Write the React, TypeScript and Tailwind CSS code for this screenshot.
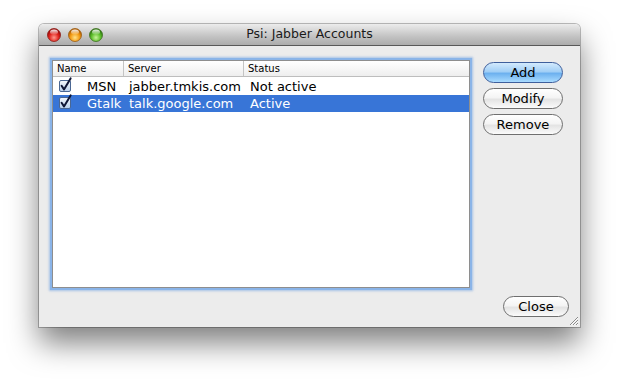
import React from "react";

const font = { fontFamily: '"DejaVu Sans", "Liberation Sans", sans-serif' };

function Light({ id, c1, c2, c3, stroke }: { id: string; c1: string; c2: string; c3: string; stroke: string }) {
  return (
    <svg width="14" height="14" viewBox="0 0 14 14" className="block">
      <defs>
        <radialGradient id={`g-${id}`} cx="50%" cy="70%" r="60%">
          <stop offset="0%" stopColor={c1} />
          <stop offset="60%" stopColor={c2} />
          <stop offset="100%" stopColor={c3} />
        </radialGradient>
        <linearGradient id={`h-${id}`} x1="0" y1="0" x2="0" y2="1">
          <stop offset="0%" stopColor="#ffffff" stopOpacity="0.95" />
          <stop offset="100%" stopColor="#ffffff" stopOpacity="0.1" />
        </linearGradient>
      </defs>
      <circle cx="7" cy="7" r="6.5" fill={`url(#g-${id})`} stroke={stroke} strokeWidth="0.8" />
      <ellipse cx="7" cy="4" rx="4" ry="2.6" fill={`url(#h-${id})`} />
    </svg>
  );
}

function Check() {
  return (
    <svg width="14" height="16" viewBox="0 0 14 16" className="block" style={{ overflow: "visible" }}>
      <defs>
        <linearGradient id="cb" x1="0" y1="0" x2="0" y2="1">
          <stop offset="0%" stopColor="#f4f8fd" />
          <stop offset="100%" stopColor="#b9d0ec" />
        </linearGradient>
      </defs>
      <rect x="1.5" y="3.5" width="11" height="11" rx="1.5" fill="url(#cb)" stroke="#4a6793" />
      <path d="M3.6 8.8 L6 12.4 L12.6 1.4" fill="none" stroke="#0e1636" strokeWidth="2" strokeLinecap="round" strokeLinejoin="round" />
    </svg>
  );
}

function Btn({ label, primary, w }: { label: string; primary?: boolean; w: string }) {
  return (
    <div
      className={`${w} h-[21px] rounded-full border flex items-center justify-center text-[13px] text-black leading-none ${
        primary
          ? "border-[#3f5f9c] bg-[linear-gradient(to_bottom,#d3eafd_0%,#a2cff6_45%,#6db1ef_55%,#a9dbff_100%)]"
          : "border-[#6f6f6f] bg-[linear-gradient(to_bottom,#ffffff_0%,#f4f4f4_45%,#e4e4e4_55%,#fbfbfb_100%)]"
      }`}
      style={font}
    >
      {label}
    </div>
  );
}

export default function App() {
  const rows = [
    { name: "MSN", server: "jabber.tmkis.com", status: "Not active", sel: false },
    { name: "Gtalk", server: "talk.google.com", status: "Active", sel: true },
  ];
  return (
    <div className="w-[620px] h-[382px] bg-white overflow-hidden pt-[24px] pl-[39px]" style={font}>
      <div className="w-[541px] h-[303px] rounded-t-[5px] flex flex-col shadow-[0_16px_30px_rgba(0,0,0,0.5),0_0_0_1px_rgba(0,0,0,0.25)] relative">
        {/* Title bar */}
        <div className="h-[22px] rounded-t-[5px] bg-[linear-gradient(to_bottom,#ececec,#c2c2c2_60%,#acacac)] border-b border-[#585858] flex items-center relative">
          <div className="flex items-center gap-[7px] pl-[8px]">
            <Light id="r" c1="#ff9a8f" c2="#e0231c" c3="#9c0b0b" stroke="#8a1a15" />
            <Light id="o" c1="#ffe38a" c2="#f39a12" c3="#b35e00" stroke="#9a5a10" />
            <Light id="g" c1="#c8f59a" c2="#5cbd2a" c3="#2f7a10" stroke="#3d7020" />
          </div>
          <div className="absolute inset-0 flex items-center justify-center text-[12.5px] text-[#1a1a1a] pointer-events-none">
            Psi: Jabber Accounts
          </div>
        </div>
        {/* Body */}
        <div className="flex-1 bg-[#ececec] flex flex-col">
          <div className="flex items-start pt-[14px] pl-[13px]">
            <div className="w-[418px] h-[228px] bg-white border border-[#8e8e8e] shadow-[0_0_0_2px_#8ab4e8,0_0_2px_3px_rgba(110,160,225,0.55)]">
              <div className="flex h-[16px] border-b border-[#bdbdbd] bg-[linear-gradient(to_bottom,#ffffff,#eeeeee)] text-[10px] text-black leading-none">
                <div className="w-[71px] pl-[4px] flex items-center border-r border-[#c4c4c4]">Name</div>
                <div className="w-[120px] pl-[4px] flex items-center border-r border-[#c4c4c4]">Server</div>
                <div className="flex-1 pl-[4px] flex items-center">Status</div>
              </div>
              <div className="mt-[1px]">
                {rows.map((r) => (
                  <div
                    key={r.name}
                    className={`flex h-[17px] items-center text-[13px] leading-none ${
                      r.sel ? "bg-[#3875d7] text-white" : "text-black"
                    }`}
                  >
                    <div className="w-[71px] flex items-center">
                      <div className="ml-[5px] w-[14px] -mt-[4px]">
                        <Check />
                      </div>
                      <span className="ml-[15px]">{r.name}</span>
                    </div>
                    <div className="w-[120px] pl-[5px]">{r.server}</div>
                    <div className="flex-1 pl-[6px]">{r.status}</div>
                  </div>
                ))}
              </div>
            </div>
            <div className="ml-[13px] mt-[2px] flex flex-col gap-[5px]">
              <Btn label="Add" primary w="w-[80px]" />
              <Btn label="Modify" w="w-[80px]" />
              <Btn label="Remove" w="w-[80px]" />
            </div>
          </div>
          <div className="flex justify-end pr-[11px] mt-[8px]">
            <Btn label="Close" w="w-[66px]" />
          </div>
        </div>
        <svg className="absolute right-[1px] bottom-[1px]" width="11" height="11" viewBox="0 0 11 11">
          <path d="M10 2 L2 10 M10 5 L5 10 M10 8 L8 10" stroke="#8a8a8a" strokeWidth="1" />
          <path d="M10 3 L3 10 M10 6 L6 10 M10 9 L9 10" stroke="#ffffff" strokeWidth="0.8" />
        </svg>
      </div>
    </div>
  );
}
